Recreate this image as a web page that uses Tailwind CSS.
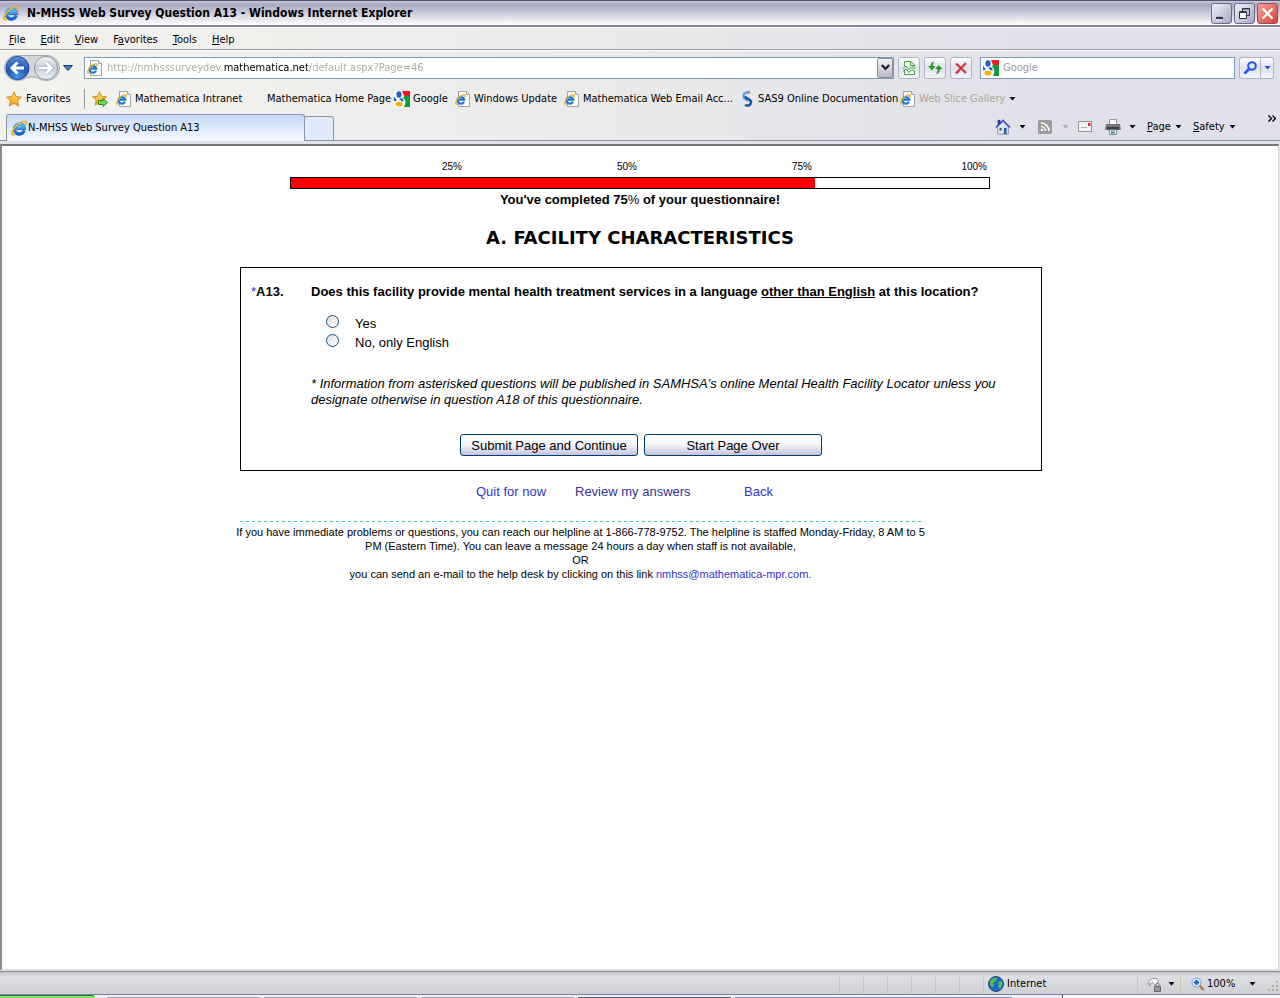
<!DOCTYPE html>
<html lang="en">
<head>
  <meta charset="UTF-8">
  <meta name="viewport" content="width=device-width, initial-scale=1.0">
  <title>N-MHSS Web Survey Question A13</title>
  <script src="https://cdn.jsdelivr.net/npm/@tailwindcss/browser@4"></script>
</head>
<body class="min-h-screen flex flex-col bg-[#e2e3ea] font-['DejaVu_Sans_Condensed','Liberation_Sans',sans-serif] text-[11px] leading-4 text-black">

  <!-- Shared icons -->
  <svg class="absolute w-0 h-0" aria-hidden="true">
    <defs>
      <linearGradient id="ieBlue" x1="0" y1="0" x2="0" y2="1"><stop offset="0" stop-color="#5cc8f8"/><stop offset="1" stop-color="#0f5fc4"/></linearGradient>
      <linearGradient id="gold" x1="0" y1="0" x2="0" y2="1"><stop offset="0" stop-color="#ffe680"/><stop offset="1" stop-color="#f09a10"/></linearGradient>
      <radialGradient id="backBlue" cx="0.5" cy="0.85" r="0.9"><stop offset="0" stop-color="#3f9af0"/><stop offset="0.5" stop-color="#1f56b8"/><stop offset="1" stop-color="#6f9ade"/></radialGradient>
      <linearGradient id="fwdGray" x1="0" y1="0" x2="0" y2="1"><stop offset="0" stop-color="#f4f6f9"/><stop offset="0.5" stop-color="#c3ccd8"/><stop offset="1" stop-color="#eef3f8"/></linearGradient>
    </defs>
    <symbol id="ie" viewBox="0 0 16 16">
      <path d="M13.2 10.6A5 5 0 1 1 13.4 8.3H5.5" fill="none" stroke="#1f62b4" stroke-width="3.2"/>
      <path d="M13.2 10.6A5 5 0 1 1 13.4 8.3H5.5" fill="none" stroke="url(#ieBlue)" stroke-width="2.5"/>
      <path d="M4 14.2C.3 16.200-.2 12.500 3.200 8.200C6.500 4 12 .4 14.300 1.400C15.500 2 15 4 14.200 5.400" fill="none" stroke="#f3b21a" stroke-width="1.600"/>
    </symbol>
    <symbol id="iepage" viewBox="0 0 16 16">
      <path d="M3.500.5H11.500L14.500 3.500V15.500H3.500Z" fill="#fff" stroke="#a3a3a3"/>
      <path d="M11.500.5V3.500H14.500" fill="#e8e8e8" stroke="#a3a3a3"/>
      <path d="M9 10.600A3.400 3.400 0 1 1 9.200 8.600H4" fill="none" stroke="#1a78d4" stroke-width="2.200"/>
      <path d="M2.500 12.800C.5 13.800 0 12 2 9C4 6 8 3.200 9.800 4C10.600 4.500 10.300 5.500 9.800 6.500" fill="none" stroke="#f0ab18" stroke-width="1.300"/>
    </symbol>
    <symbol id="google" viewBox="0 0 16 16">
      <path d="M0 0H16V16H0Z" fill="#fff"/>
      <path d="M8 0H16V5H10Z" fill="#f01a1a"/>
      <path d="M10 5H16V16H10C12 12 12 9 9 7Z" fill="#129a3c"/>
      <ellipse cx="5" cy="3.500" rx="2.600" ry="3.300" fill="#1d62c8"/>
      <path d="M0 5.500L3 9.500L0 10.500Z" fill="#1d62c8"/>
      <path d="M5 8L8 7L10 10L8 10.500Z" fill="#1d62c8"/>
      <ellipse cx="5" cy="13" rx="3.600" ry="2.500" fill="#f6b312"/>
    </symbol>
    <symbol id="star" viewBox="0 0 16 16">
      <path d="M8 .8L10.200 5.600L15.400 6.200L11.500 9.700L12.700 15L8 12.300L3.300 15L4.500 9.700L.6 6.200L5.800 5.600Z" fill="url(#gold)" stroke="#d08a1a" stroke-width="1" stroke-linejoin="round"/>
    </symbol>
    <symbol id="down" viewBox="0 0 7 4"><path d="M.5 0H6.500L3.500 3.500Z" fill="currentColor"/></symbol>
  </svg>

  <!-- Title bar -->
  <header class="h-[27px] flex items-center pl-[3px] pr-[2px] border-t border-b-2 border-t-[#55556f] border-b-[#83839a] bg-linear-to-b from-[#c8c8d8] via-[#a9a9c2] via-15% to-white">
    <svg class="size-4 shrink-0"><use href="#ie"/></svg>
    <h1 class="ml-2 flex-1 font-bold text-[12px]">N-MHSS Web Survey Question A13 - Windows Internet Explorer</h1>
    <div class="flex gap-[2px]">
      <button aria-label="Minimize" class="size-[21px] rounded-[3px] border border-[#6b6b8c] bg-linear-to-br from-[#f4f4fa] to-[#a6a6c0]">
        <svg viewBox="0 0 19 19"><path d="M4 14.500H10" stroke="#fff" stroke-width="4"/><path d="M4 14H11" stroke="#33334a" stroke-width="2.500"/></svg>
      </button>
      <button aria-label="Restore" class="size-[21px] rounded-[3px] border border-[#6b6b8c] bg-linear-to-br from-[#f4f4fa] to-[#a6a6c0]">
        <svg viewBox="0 0 19 19" fill="none" stroke="#33334a"><path d="M7.500 7V4.500H14.500V11.500H12"/><path d="M7 5H15"/><path d="M4.500 7.500H11.500V14.500H4.500Z" fill="#fff"/><path d="M4 8.500H12"/></svg>
      </button>
      <button aria-label="Close" class="size-[21px] rounded-[3px] border border-[#a04a50] bg-linear-to-br from-[#f0a09a] to-[#d0403c]">
        <svg viewBox="0 0 19 19"><path d="M4.500 4.500L14.500 14.500M14.500 4.500L4.500 14.500" stroke="#fff" stroke-width="2.200"/></svg>
      </button>
    </div>
  </header>

  <div class="bg-linear-to-r from-[#f3f3ee] via-[#ebebeb] via-45% to-[#dfe0ea] to-85%">
    <!-- Menu -->
    <nav class="h-[23px] flex items-center gap-[15px] pl-[9px] pt-[2px] border-t border-t-white border-b border-b-[#9d9da2]">
      <button><span class="underline">F</span>ile</button>
      <button><span class="underline">E</span>dit</button>
      <button><span class="underline">V</span>iew</button>
      <button>F<span class="underline">a</span>vorites</button>
      <button><span class="underline">T</span>ools</button>
      <button><span class="underline">H</span>elp</button>
    </nav>

    <!-- Address row -->
    <div class="h-[34px] flex items-center px-1 border-t border-t-white">
      <svg class="w-[56px] h-7 shrink-0" viewBox="0 0 56 28">
        <path d="M13 1.500H43A12.500 12.500 0 0 1 43 26.500C36 26.500 34 23 28 23S20 26.500 13 26.500A12.500 12.500 0 0 1 13 1.500Z" fill="#d4d5d6" stroke="#a9abad"/>
        <circle cx="13.500" cy="14" r="11.500" fill="url(#backBlue)" stroke="#1d4690"/>
        <path d="M20 14H9M13.500 8.500L8 14L13.500 19.500" fill="none" stroke="#fff" stroke-width="3"/>
        <circle cx="42" cy="14" r="11.500" fill="url(#fwdGray)" stroke="#8d97a5"/>
        <path d="M35 14H47M42 8.500L47.500 14L42 19.500" fill="none" stroke="#a9b3c0" stroke-width="4"/>
        <path d="M35 14H47M42 8.500L47.500 14L42 19.500" fill="none" stroke="#fff" stroke-width="2.600"/>
      </svg>
      <button aria-label="Recent pages" class="ml-[3px] w-[10px]">
        <svg class="w-[10px] h-[6px]" viewBox="0 0 10 6"><path d="M.5.5H9.500L5 5.500Z" fill="#3a8ad0" stroke="#123a78"/></svg>
      </button>
      <form class="ml-[11px] flex-1 h-[22px] flex items-center bg-white border border-[#7f9db9] pl-[2px]">
        <svg class="size-4 shrink-0"><use href="#iepage"/></svg>
        <input type="text" aria-label="Address" value="http://nmhsssurveydev.mathematica.net/default.aspx?Page=46" class="ml-1 flex-1 min-w-0 h-4 outline-none text-transparent bg-clip-text bg-[linear-gradient(to_right,#aca899_117px,#000_117px,#000_201px,#aca899_201px)]">
        <button type="button" aria-label="Show addresses" class="w-4 h-5 flex items-center justify-center border border-[#8a8a9c] rounded-[2px] bg-linear-to-b from-[#f2f2f7] to-[#b9b9cc]">
          <svg class="w-[9px] h-[7px]" viewBox="0 0 9 7"><path d="M.8 1L4.500 4.800L8.200 1" fill="none" stroke="#222" stroke-width="2.200"/></svg>
        </button>
      </form>
      <div class="ml-1 flex gap-1">
        <button aria-label="Compatibility view" class="size-[22px] rounded-[3px] border border-[#b0b2c4] bg-linear-to-b from-white via-[#dde1ef] to-[#f3f5fb]">
          <svg viewBox="0 0 20 20" fill="none" stroke="#3fa53a"><path d="M5.500 8V3.500H12L15.500 7V9M5.500 12V16.500H15.500V13M11.500 4V7.500H15" fill="#fff"/><path d="M4 10.500L7 8L10 11.500L13 8.500L16 11M4 13.500L7 11L10 14.500L13 11.500L16 14"/></svg>
        </button>
        <button aria-label="Refresh" class="size-[22px] rounded-[3px] border border-[#b0b2c4] bg-linear-to-b from-white via-[#dde1ef] to-[#f3f5fb]">
          <svg viewBox="0 0 20 20" fill="#2f9a2a"><path d="M3 8L7 12.500L10.500 8H8.200C8.200 6 8.500 5 9.500 3.500C6.800 4 5.500 5.500 5.500 8Z"/><path d="M10 11L13.500 7L17.500 11H15.200C15.200 14 13.500 15.800 10.500 16.200C12 15 12.600 13.500 12.500 11Z"/></svg>
        </button>
        <button aria-label="Stop" class="size-[22px] rounded-[3px] border border-[#b0b2c4] bg-linear-to-b from-white via-[#dde1ef] to-[#f3f5fb]">
          <svg viewBox="0 0 20 20"><path d="M5 5.500L15 15M15 5L5 15.500" stroke="#cf3a3a" stroke-width="2.400"/></svg>
        </button>
      </div>
      <form class="ml-2 flex items-center">
        <div class="w-[255px] h-[22px] flex items-center bg-white border border-[#7f9db9] pl-[2px]">
          <svg class="size-4 shrink-0"><use href="#google"/></svg>
          <input type="search" aria-label="Search" placeholder="Google" class="ml-1 flex-1 min-w-0 h-4 outline-none placeholder:text-[#9a9a9a]">
        </div>
        <button type="button" aria-label="Search" class="ml-1 w-[22px] h-[22px] rounded-l-[3px] border border-[#b0b2c4] bg-linear-to-b from-white via-[#dde1ef] to-[#f3f5fb]">
          <svg viewBox="0 0 20 20" fill="none" stroke="#1c5ce0"><circle cx="12" cy="8" r="3.800" stroke-width="2"/><path d="M9 11L4.500 15.500" stroke-width="2.600"/></svg>
        </button>
        <button type="button" aria-label="Search options" class="w-[13px] h-[22px] flex items-center justify-center rounded-r-[3px] border border-l-0 border-[#b0b2c4] bg-linear-to-b from-white via-[#dde1ef] to-[#f3f5fb] text-[#1c4ed0]">
          <svg class="w-[7px] h-1"><use href="#down"/></svg>
        </button>
      </form>
      <div class="w-[2px]"></div>
    </div>

    <!-- Favorites bar -->
    <nav class="h-[29px] flex items-center pl-[6px] whitespace-nowrap">
      <button class="w-[78px] flex items-center gap-1"><svg class="size-4"><use href="#star"/></svg>Favorites</button>
      <div class="w-px h-5 bg-[#9a9a9a]"></div>
      <button aria-label="Add to Favorites" class="ml-[7px] w-[24px]">
        <svg class="size-4" viewBox="0 0 16 16"><use href="#star" width="15" height="15"/><path d="M6.500 9.500H11V7.500L15.500 11.500L11 15.500V13.500H6.500Z" fill="#6fd45a" stroke="#2c8a22"/></svg>
      </button>
      <a href="#" class="w-[132px] flex items-center gap-[3px]"><svg class="size-4"><use href="#iepage"/></svg>Mathematica Intranet</a>
      <a href="#" class="ml-[19px] w-[127px]">Mathematica Home Page</a>
      <a href="#" class="w-[61px] flex items-center gap-[3px]"><svg class="size-4"><use href="#google"/></svg>Google</a>
      <a href="#" class="w-[109px] flex items-center gap-[3px]"><svg class="size-4"><use href="#iepage"/></svg>Windows Update</a>
      <a href="#" class="w-[175px] flex items-center gap-[3px]"><svg class="size-4"><use href="#iepage"/></svg>Mathematica Web Email Acc...</a>
      <a href="#" class="w-[161px] flex items-center gap-[3px]">
        <svg class="size-4 shrink-0" viewBox="0 0 16 16" fill="none"><path d="M11 1.500C6 .5 3.500 3.500 5 6.500C6 8 8 8.500 9 10" stroke="#5a9be0" stroke-width="2.400"/><path d="M6 5.500C8 8 12 8 12 11C12 14 9 15.500 6 14" stroke="#1450a8" stroke-width="2.400"/></svg>
        SAS9 Online Documentation
      </a>
      <button class="flex items-center gap-[3px] text-[#aca899]"><svg class="size-4"><use href="#iepage"/></svg>Web Slice Gallery<svg class="ml-px w-[7px] h-1 text-black"><use href="#down"/></svg></button>
    </nav>

    <!-- Tabs and command bar -->
    <div class="h-[28px] flex items-stretch border-b border-[#8f93a8] pl-[6px]">
      <button class="-mb-px mt-px w-[299px] flex items-center pl-1 rounded-t-[3px] border border-b-0 border-[#8f93a8] bg-linear-to-b from-[#c2daf8] to-[#f6f9fe]">
        <svg class="size-4"><use href="#ie"/></svg><span class="ml-px">N-MHSS Web Survey Question A13</span>
      </button>
      <button aria-label="New tab" class="mt-[3px] -ml-px -mb-px w-[30px] rounded-t-[3px] border border-[#8f93a8] bg-[#e0ebf9]"></button>
      <div class="flex-1"></div>
      <div class="flex items-center mr-[33px]">
        <button aria-label="Home" class="w-[43px] flex items-center gap-2">
          <svg class="size-4" viewBox="0 0 18 18"><path d="M3 1H6V7H3Z" fill="#2338b0"/><path d="M3 9L9 3L15 9V17H3Z" fill="#dfe8f5" stroke="#7f8fb0"/><path d="M1 9.500L9 1.500L17 9.500" fill="none" stroke="#3550c0" stroke-width="1.600"/><path d="M10 10H13V17H10Z" fill="#1f5fb0"/><path d="M5 10H7.500V13H5Z" fill="#555"/></svg>
          <svg class="w-[7px] h-1"><use href="#down"/></svg>
        </button>
        <button aria-label="Feeds" class="w-[40px] flex items-center gap-[10px] text-[#b4b4b4]">
          <svg class="size-[14px]" viewBox="0 0 14 14"><rect width="14" height="14" rx="1.500" fill="#9b9b9b"/><g fill="none" stroke="#fff" stroke-width="1.600"><path d="M3 6.500A4.500 4.500 0 0 1 7.500 11M3 3A8 8 0 0 1 11 11"/></g><circle cx="4" cy="10" r="1.300" fill="#fff"/></svg>
          <svg class="w-[7px] h-1"><use href="#down"/></svg>
        </button>
        <button aria-label="Read mail" class="w-[27px]">
          <svg class="w-[14px] h-[11px]" viewBox="0 0 14 11"><path d="M.5.5H13.500V10.500H.5Z" fill="#f4f4f4" stroke="#909090"/><path d="M10 2H12.500V5H10Z" fill="#e03030"/><path d="M3 6.500H9" stroke="#b0b0b0"/></svg>
        </button>
        <button aria-label="Print" class="w-[42px] flex items-center gap-2">
          <svg class="size-4" viewBox="0 0 16 16"><path d="M4.500.5H11.500V6H4.500Z" fill="#fff" stroke="#999"/><path d="M1 5H15L16 11H0Z" fill="#777"/><path d="M2 8H14V10.500H2Z" fill="#3e3e3e"/><path d="M4 11H12L11.500 15.500H4.500Z" fill="#e8f0f8" stroke="#888"/><path d="M6 12.500H8V14.500H6Z" fill="#2a7ad0"/><path d="M8 12.500H10V14.500H8Z" fill="#38a060"/></svg>
          <svg class="w-[7px] h-1"><use href="#down"/></svg>
        </button>
        <button class="w-[46px] flex items-center gap-1"><span><span class="underline">P</span>age</span><svg class="w-[7px] h-1"><use href="#down"/></svg></button>
        <button class="w-[46px] flex items-center gap-1"><span><span class="underline">S</span>afety</span><svg class="w-[7px] h-1"><use href="#down"/></svg></button>
        <button aria-label="More commands" class="ml-[29px] -mr-[29px] self-start pt-[2px]">
          <svg class="w-2 h-[7px]" viewBox="0 0 8 7"><path d="M.5.5L3.500 3.500L.5 6.500M4.500.5L7.500 3.500L4.500 6.500" fill="none" stroke="#000" stroke-width="1.400"/></svg>
        </button>
      </div>
    </div>
  </div>

  <!-- Page -->
  <main class="flex-1 mt-[3px] border-t-2 border-l-2 border-t-[#77777a] border-l-[#8a8a92] border-r border-b border-r-[#d8d8de] border-b-[#d8d8de] mb-px mr-px bg-white font-['Liberation_Sans',Arial,sans-serif] text-[13px]">
    <div class="w-full max-w-[800px] mx-auto pt-[14px]">
      <div class="w-full max-w-[700px] mx-auto">
        <div class="grid grid-cols-4 text-right text-[10px] leading-[14px]">
          <span class="pr-[3px]">25%</span><span class="pr-[3px]">50%</span><span class="pr-[3px]">75%</span><span class="pr-[3px]">100%</span>
        </div>
        <div class="mt-[3px] h-3 border border-black"><div class="h-full bg-[#ff0000]" style="width: 75%"></div></div>
        <p class="mt-[3px] text-center font-bold">You've completed 75<span class="font-normal">%</span> of your questionnaire!</p>
      </div>
      <h2 class="mt-[18px] text-center font-['DejaVu_Sans',Verdana,sans-serif] font-bold text-[18px] leading-6">A. FACILITY CHARACTERISTICS</h2>

      <form>
        <fieldset class="mt-[17px] -mr-[2px] border border-black px-[10px] pt-4 pb-[14px] block">
          <div class="flex">
            <div class="w-[60px] font-bold"><span class="font-normal text-[#3333cc]">*</span>A13.</div>
            <div class="flex-1">
              <p class="font-bold">Does this facility provide mental health treatment services in a language <span class="underline">other than English</span> at this location?</p>
              <div class="mt-[14px] pl-[15px] leading-[19px]">
                <div class="flex">
                  <input type="radio" name="a13" id="yes" class="appearance-none mt-px size-[13px] rounded-full border border-[#1c5180] bg-linear-to-br from-[#dcdcd7] to-white">
                  <label for="yes" class="ml-4">Yes</label>
                </div>
                <div class="flex">
                  <input type="radio" name="a13" id="no" class="appearance-none mt-px size-[13px] rounded-full border border-[#1c5180] bg-linear-to-br from-[#dcdcd7] to-white">
                  <label for="no" class="ml-4">No, only English</label>
                </div>
              </div>
              <p class="mt-6 italic">* Information from asterisked questions will be published in SAMHSA's online Mental Health Facility Locator unless you<br>designate otherwise in question A18 of this questionnaire.</p>
            </div>
          </div>
          <div class="mt-[26px] flex justify-center gap-[6px]">
            <button type="submit" class="w-[178px] h-[22px] pt-px rounded-[3px] border border-[#003c74] bg-linear-to-b from-white via-[#f4f4fa] to-[#c4c4da]">Submit Page and Continue</button>
            <button type="reset" class="w-[178px] h-[22px] pt-px rounded-[3px] border border-[#003c74] bg-linear-to-b from-white via-[#f4f4fa] to-[#c4c4da]">Start Page Over</button>
          </div>
        </fieldset>
      </form>

      <nav class="mt-[13px] pl-[236px] flex text-[#3333cc]">
        <a href="#" class="w-[99px]">Quit for now</a>
        <a href="#" class="w-[169px] text-[#333399]">Review my answers</a>
        <a href="#">Back</a>
      </nav>

      <footer class="mt-[21px] w-[681px] flex flex-col items-center text-center text-[11px] leading-[14px]">
        <div class="w-full h-px mb-[3px] bg-[repeating-linear-gradient(to_right,#4fd09a_0_3px,#fff_3px_6px)]"></div>
        <p class="whitespace-nowrap">If you have immediate problems or questions, you can reach our helpline at 1-866-778-9752. The helpline is staffed Monday-Friday, 8 AM to 5<br>PM (Eastern Time). You can leave a message 24 hours a day when staff is not available,<br>OR<br>you can send an e-mail to the help desk by clicking on this link <a href="#" class="text-[#3333cc]">nmhss@mathematica-mpr.com.</a></p>
      </footer>
    </div>
  </main>

  <!-- Status bar -->
  <div class="h-[23px] flex items-center justify-end pt-[2px] border-t border-t-[#85858c] bg-linear-to-b from-[#c6c7cc] via-[#dedfe5] via-20% to-[#cfd0d6]">
    <div class="flex">
      <div class="w-6 h-[17px] border-l border-[#c9c5b0]"></div>
      <div class="w-6 h-[17px] border-l border-[#c9c5b0]"></div>
      <div class="w-6 h-[17px] border-l border-[#c9c5b0]"></div>
      <div class="w-6 h-[17px] border-l border-[#c9c5b0]"></div>
      <div class="w-6 h-[17px] border-l border-[#c9c5b0]"></div>
      <div class="w-6 h-[17px] border-l border-[#c9c5b0]"></div>
    </div>
    <div class="w-[154px] h-[17px] flex items-center pl-1 gap-[3px] border-l border-[#c9c5b0]">
      <svg class="size-4" viewBox="0 0 16 16"><circle cx="8" cy="8" r="7.500" fill="#2467c8" stroke="#27477c"/><path d="M2 5C4 2 7 1.500 9 2L8 5L5 7L6 10L4 11C2 9 1.500 7 2 5ZM10 6L14 5C15 8 14 11 12 13L10 11L11 9Z" fill="#4fc04a"/></svg>
      Internet
    </div>
    <button aria-label="Protected mode" class="w-[43px] h-[17px] flex items-center pl-[9px] gap-[6px] border-l border-[#c9c5b0]">
      <svg class="size-[15px]" viewBox="0 0 15 15"><path d="M1 7A6 6 0 0 1 12 4L8 8L5 5" fill="#f4f4f4" stroke="#999"/><path d="M0 6H5L3 10Z" fill="#aaa"/><path d="M7.500 9.500H13.500V14.500H7.500Z" fill="#999" stroke="#666"/><path d="M9 9V7.500A1.500 1.500 0 0 1 12 7.500V9" fill="none" stroke="#777"/></svg>
      <svg class="w-[7px] h-1"><use href="#down"/></svg>
    </button>
    <button class="w-[100px] h-[17px] flex items-center pl-[10px] gap-[2px] border-l border-[#c9c5b0]">
      <svg class="size-[14px]" viewBox="0 0 14 14"><path d="M8.500 8.500L12.500 13" stroke="#b07a3a" stroke-width="2.600"/><circle cx="5.500" cy="5.500" r="4.500" fill="#d8ecff" stroke="#7aa0cc"/><path d="M5.500 3V8M3 5.500H8" stroke="#0a5ad0" stroke-width="2"/></svg>
      100%
      <svg class="ml-3 w-[7px] h-1"><use href="#down"/></svg>
      <svg class="ml-auto w-3 h-3 self-end" viewBox="0 0 12 12" fill="#b4b09c"><path d="M8 0h2v2H8zM4 4h2v2H4zM8 4h2v2H8zM0 8h2v2H0zM4 8h2v2H4zM8 8h2v2H8z"/></svg>
    </button>
  </div>

  <!-- Taskbar edge -->
  <div class="h-1 flex items-end border-t border-t-[#7d7da6] bg-[#f0f0f6]">
    <div class="w-[95px] h-full bg-[#8fdc70] border-t border-[#1f8a1f] rounded-tr-[3px]"></div>
    <div class="flex-1 flex gap-1 pl-3">
      <div class="w-[153px] h-px bg-[#a4a4b0]"></div>
      <div class="w-[153px] h-px bg-[#a4a4b0]"></div>
      <div class="w-[153px] h-px bg-[#a4a4b0]"></div>
      <div class="w-[153px] h-px bg-[#5f6470]"></div>
      <div class="w-[277px] h-px bg-[#7f9db9]"></div>
    </div>
    <div class="w-[218px] h-full border-l border-[#55556f] bg-white"></div>
  </div>
</body>
</html>
